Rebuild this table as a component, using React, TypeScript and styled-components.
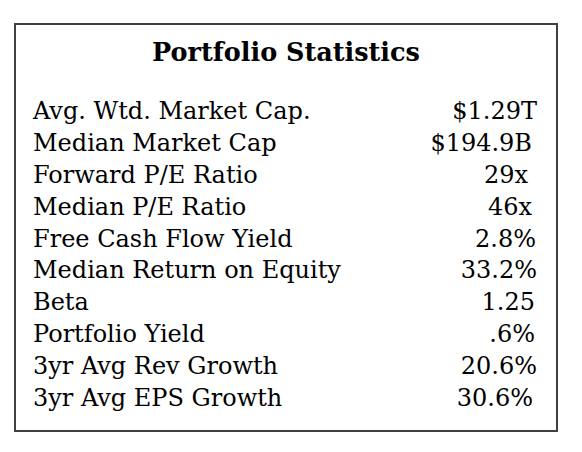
import styled, { createGlobalStyle } from "styled-components";

const GlobalStyle = createGlobalStyle`
  html, body {
    margin: 0;
    padding: 0;
    background: #ffffff;
  }
`;

const stats = [
  { label: "Avg. Wtd. Market Cap.", value: "$1.29T", nudge: 0 },
  { label: "Median Market Cap", value: "$194.9B", nudge: 5 },
  { label: "Forward P/E Ratio", value: "29x", nudge: 9 },
  { label: "Median P/E Ratio", value: "46x", nudge: 5 },
  { label: "Free Cash Flow Yield", value: "2.8%", nudge: 1 },
  { label: "Median Return on Equity", value: "33.2%", nudge: 0 },
  { label: "Beta", value: "1.25", nudge: 2 },
  { label: "Portfolio Yield", value: ".6%", nudge: 2 },
  { label: "3yr Avg Rev Growth", value: "20.6%", nudge: 0 },
  { label: "3yr Avg EPS Growth", value: "30.6%", nudge: 4 },
];

export default function App() {
  return (
    <>
      <GlobalStyle />
      <Page>
        <StatsBox>
          <Title>Portfolio Statistics</Title>
          <StatsList>
            {stats.map((s) => (
              <StatRow key={s.label}>
                <Label>{s.label}</Label>
                <Value $nudge={s.nudge}>{s.value}</Value>
              </StatRow>
            ))}
          </StatsList>
        </StatsBox>
      </Page>
    </>
  );
}

const Page = styled.div`
  padding: 23px 0 0 14px;
  font-family: "DejaVu Serif", "Liberation Serif", serif;
  color: #000000;
`;

const StatsBox = styled.div`
  box-sizing: border-box;
  width: 544px;
  height: 409px;
  border: 2px solid #404040;
  display: flex;
  flex-direction: column;
`;

const Title = styled.h1`
  margin: 0;
  padding-top: 12px;
  text-align: center;
  font-size: 25.5px;
  font-weight: bold;
  line-height: 30px;
`;

const StatsList = styled.div`
  margin-top: 29px;
  padding: 0 19px 0 17px;
  display: flex;
  flex-direction: column;
`;

const StatRow = styled.div`
  display: flex;
  justify-content: space-between;
  align-items: baseline;
  height: 31.9px;
  font-size: 24px;
  line-height: 31.9px;
`;

const Label = styled.span`
  white-space: nowrap;
`;

const Value = styled.span<{ $nudge: number }>`
  white-space: nowrap;
  padding-right: ${(p) => p.$nudge}px;
`;
